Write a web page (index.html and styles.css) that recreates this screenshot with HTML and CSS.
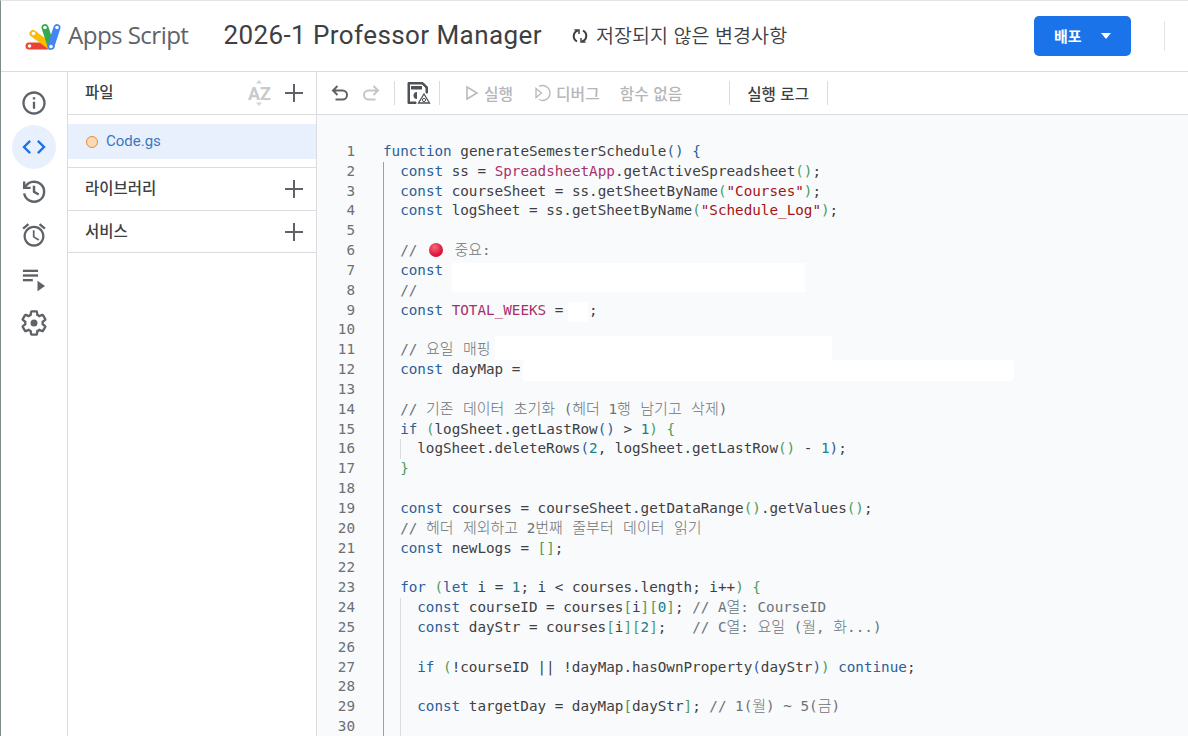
FILE: index.html
```html
<!DOCTYPE html>
<html lang="ko">
<head>
<meta charset="utf-8">
<title>Apps Script</title>
<link rel="stylesheet" href="styles.css">
</head>
<body>
<div class="app">
  <header class="topbar">
    <div class="brand">
      <svg class="logo" width="38" height="30" viewBox="0 0 38 30">
        <g fill="none" stroke-width="7" stroke-linecap="round">
          <path d="M4 24H26" stroke="#ea4335"/>
          <path d="M8 11.5L25 24" stroke="#fbbc04"/>
          <path d="M20 5.5L26 24" stroke="#34a853"/>
          <path d="M32 5.5L26 24" stroke="#4285f4"/>
        </g>
        <g fill="#fff"><circle cx="4.5" cy="24" r="1.8"/><circle cx="8.5" cy="11.5" r="1.8"/><circle cx="20" cy="5.5" r="1.8"/><circle cx="32" cy="5.5" r="1.8"/><circle cx="26" cy="24.5" r="1.8"/></g>
      </svg>
      <span class="brand-name">Apps Script</span>
    </div>
    <h1 class="title">2026-1 Professor Manager</h1>
    <div class="status">
      <svg width="18" height="18" viewBox="0 0 18 18" fill="none" stroke="#3c4043" stroke-width="2"><path d="M7 3.6A5.8 5.8 0 0 0 6 14.4M11 14.4A5.8 5.8 0 0 0 12 3.6"/><path d="M3.5 3H8V7" stroke-width="1.5"/><path d="M14.5 15H10V11" stroke-width="1.5"/></svg>
      <span class="status-text">저장되지 않은 변경사항</span>
    </div>
    <div class="spacer"></div>
    <button class="deploy"><span class="deploy-label">배포</span><i class="caret"></i></button>
    <div class="top-divider"></div>
  </header>

  <div class="main">
    <nav class="rail">
      <div class="rail-item"><svg width="28" height="28" viewBox="0 0 24 24" fill="#5f6368"><path d="M11 7h2v2h-2zm0 4h2v6h-2zm1-9C6.48 2 2 6.48 2 12s4.48 10 10 10 10-4.48 10-10S17.52 2 12 2zm0 18c-4.41 0-8-3.59-8-8s3.59-8 8-8 8 3.59 8 8-3.59 8-8 8z"/></svg></div>
      <div class="rail-item active"><svg width="28" height="28" viewBox="0 0 24 24" fill="#1a73e8"><path d="M9.4 16.6L4.8 12l4.6-4.6L8 6l-6 6 6 6 1.4-1.4zm5.2 0l4.6-4.6-4.6-4.6L16 6l6 6-6 6-1.4-1.4z"/></svg></div>
      <div class="rail-item"><svg width="28" height="28" viewBox="0 0 24 24" fill="none" stroke="#5f6368" stroke-width="2.1"><path d="M4.3 9A8.6 8.6 0 1 1 3.6 14"/><path d="M3.6 3.8V9.3H9.1" /><path d="M12 7.4V12.6L16 15"/></svg></div>
      <div class="rail-item"><svg width="28" height="28" viewBox="0 0 24 24" fill="#5f6368"><path d="M22 5.72l-4.6-3.86-1.29 1.53 4.6 3.86L22 5.72zM7.88 3.39L6.6 1.86 2 5.71l1.29 1.53 4.59-3.85zM12.5 8H11v6l4.75 2.85.75-1.23-4-2.37V8zM12 4c-4.97 0-9 4.03-9 9s4.02 9 9 9c4.97 0 9-4.03 9-9s-4.03-9-9-9zm0 16c-3.87 0-7-3.13-7-7s3.13-7 7-7 7 3.13 7 7-3.13 7-7 7z"/></svg></div>
      <div class="rail-item"><svg width="28" height="28" viewBox="0 0 24 24" fill="#5f6368"><rect x="2.5" y="4" width="13" height="2"/><rect x="2.5" y="8" width="13" height="2"/><rect x="2.5" y="12" width="8.5" height="2"/><path d="M15 13.5L21.5 18L15 22.5Z"/></svg></div>
      <div class="rail-item"><svg width="28" height="28" viewBox="0 0 24 24" fill="none" stroke="#5f6368" stroke-width="2"><path d="M19.43 12.98c.04-.32.07-.64.07-.98s-.03-.66-.07-.98l2.11-1.65c.19-.15.24-.42.12-.64l-2-3.46c-.12-.22-.39-.3-.61-.22l-2.49 1c-.52-.4-1.08-.73-1.69-.98l-.38-2.65C14.46 2.18 14.25 2 14 2h-4c-.25 0-.46.18-.49.42l-.38 2.65c-.61.25-1.17.59-1.69.98l-2.49-1c-.23-.09-.49 0-.61.22l-2 3.46c-.13.22-.07.49.12.64l2.11 1.65c-.04.32-.07.65-.07.98s.03.66.07.98l-2.11 1.65c-.19.15-.24.42-.12.64l2 3.46c.12.22.39.3.61.22l2.49-1c.52.4 1.08.73 1.69.98l.38 2.65c.03.24.24.42.49.42h4c.25 0 .46-.18.49-.42l.38-2.65c.61-.25 1.17-.59 1.69-.98l2.49 1c.23.09.49 0 .61-.22l2-3.46c.12-.22.07-.49-.12-.64l-2.11-1.65z"/><circle cx="12" cy="12" r="3" fill="#5f6368" stroke="none"/></svg></div>
    </nav>

    <aside class="files">
      <div class="files-head section">
        <span class="label">파일</span>
        <div class="actions">
          <svg width="24" height="26" viewBox="0 0 24 26"><path d="M12 0L9 3.5H15Z M12 26L9 22.5H15Z" fill="#d0d2d4"/><text x="1" y="20" class="az">AZ</text></svg>
          <svg width="20" height="20" viewBox="0 0 20 20" stroke="#5f6368" stroke-width="2"><path d="M10 1V19M1 10H19"/></svg>
        </div>
      </div>
      <div class="file-list">
        <div class="file"><i class="dot"></i><span class="file-name">Code.gs</span></div>
      </div>
      <div class="section lib">
        <span class="label">라이브러리</span>
        <svg width="20" height="20" viewBox="0 0 20 20" stroke="#5f6368" stroke-width="2"><path d="M10 1V19M1 10H19"/></svg>
      </div>
      <div class="section lib">
        <span class="label">서비스</span>
        <svg width="20" height="20" viewBox="0 0 20 20" stroke="#5f6368" stroke-width="2"><path d="M10 1V19M1 10H19"/></svg>
      </div>
    </aside>

    <section class="workspace">
      <div class="toolbar">
        <svg class="undo" width="20" height="20" viewBox="0 0 20 20" fill="none" stroke="#5f6368" stroke-width="2"><path d="M7.5 3L3 7.5L7.5 12M3 7.5H12.5A4.5 4.5 0 0 1 12.5 16.5H5.5"/></svg>
        <svg class="redo" width="20" height="20" viewBox="0 0 20 20" fill="none" stroke="#c4c6c8" stroke-width="2"><path d="M12.5 3L17 7.5L12.5 12M17 7.5H7.5A4.5 4.5 0 0 0 7.5 16.5H14.5"/></svg>
        <i class="sep first"></i>
        <svg class="save" width="26" height="26" viewBox="0 0 26 26"><path d="M3 2.5H18L22.5 7V13H21V8L17 4H4.5V22H11V23.5H3Z" fill="#4f5357" stroke="#4f5357" stroke-width="1"/><rect x="6" y="6" width="11" height="3.5" fill="#4f5357"/><path d="M12 12A3.5 3.5 0 1 0 12 19Z" fill="#4f5357"/><path d="M19 14L24.5 23H13.5Z" fill="#fff" stroke="#4f5357" stroke-width="1.3"/><circle cx="19" cy="20" r="1.6" fill="none" stroke="#4f5357"/></svg>
        <i class="sep second"></i>
        <div class="tool run"><svg width="14" height="16" viewBox="0 0 14 16" fill="none" stroke="#b9bbbe" stroke-width="1.6"><path d="M2 2L12 8L2 14Z"/></svg><span class="tool-label">실행</span></div>
        <div class="tool debug"><svg width="18" height="18" viewBox="0 0 18 18" fill="none" stroke="#b9bbbe" stroke-width="1.4"><path d="M2 4.5L7.5 9L2 13.5Z"/><path d="M5 2.5A7.4 7.4 0 1 1 5 15.5"/></svg><span class="tool-label">디버그</span></div>
        <div class="tool fn"><span class="tool-label">함수 없음</span></div>
        <i class="sep third"></i>
        <span class="log tool-label">실행 로그</span>
        <i class="sep fourth"></i>
      </div>

      <div class="editor">
        <div class="row"><span class="ln">1</span><span class="code"><b class="k">function</b> generateSemesterSchedule<b class="k">() {</b></span></div>
        <div class="row"><span class="ln">2</span><i class="g"></i><span class="code"><b class="k">const</b> ss = <b class="t">SpreadsheetApp</b>.getActiveSpreadsheet<b class="p">()</b>;</span></div>
        <div class="row"><span class="ln">3</span><i class="g"></i><span class="code"><b class="k">const</b> courseSheet = ss.getSheetByName<b class="p">(</b><b class="s">"Courses"</b><b class="p">)</b>;</span></div>
        <div class="row"><span class="ln">4</span><i class="g"></i><span class="code"><b class="k">const</b> logSheet = ss.getSheetByName<b class="p">(</b><b class="s">"Schedule_Log"</b><b class="p">)</b>;</span></div>
        <div class="row"><span class="ln">5</span><i class="g"></i><span class="code"></span></div>
        <div class="row"><span class="ln">6</span><i class="g"></i><span class="code"><b class="c">// <i class="ball"></i> <span class="h">중요</span>:</b></span></div>
        <div class="row"><span class="ln">7</span><i class="g"></i><span class="code"><b class="k">const</b></span></div>
        <div class="row"><span class="ln">8</span><i class="g"></i><span class="code"><b class="c">//</b></span></div>
        <div class="row"><span class="ln">9</span><i class="g"></i><span class="code"><b class="k">const</b> <b class="t">TOTAL_WEEKS</b> =   ;</span></div>
        <div class="row"><span class="ln">10</span><i class="g"></i><span class="code"></span></div>
        <div class="row"><span class="ln">11</span><i class="g"></i><span class="code"><b class="c">// <span class="h">요일 매핑</span></b></span></div>
        <div class="row"><span class="ln">12</span><i class="g"></i><span class="code"><b class="k">const</b> dayMap =</span></div>
        <div class="row"><span class="ln">13</span><i class="g"></i><span class="code"></span></div>
        <div class="row"><span class="ln">14</span><i class="g"></i><span class="code"><b class="c">// <span class="h">기존 데이터 초기화</span> (<span class="h">헤더</span> 1<span class="h">행 남기고 삭제</span>)</b></span></div>
        <div class="row"><span class="ln">15</span><i class="g"></i><span class="code"><b class="k">if</b> <b class="p">(</b>logSheet.getLastRow<b class="k">()</b> &gt; <b class="n">1</b><b class="p">) {</b></span></div>
        <div class="row"><span class="ln">16</span><i class="g"></i><i class="g2"></i><span class="code">logSheet.deleteRows<b class="k">(</b><b class="n">2</b>, logSheet.getLastRow<b class="p">()</b> - <b class="n">1</b><b class="k">)</b>;</span></div>
        <div class="row"><span class="ln">17</span><i class="g"></i><span class="code"><b class="p">}</b></span></div>
        <div class="row"><span class="ln">18</span><i class="g"></i><span class="code"></span></div>
        <div class="row"><span class="ln">19</span><i class="g"></i><span class="code"><b class="k">const</b> courses = courseSheet.getDataRange<b class="p">()</b>.getValues<b class="p">()</b>;</span></div>
        <div class="row"><span class="ln">20</span><i class="g"></i><span class="code"><b class="c">// <span class="h">헤더 제외하고</span> 2<span class="h">번째 줄부터 데이터 읽기</span></b></span></div>
        <div class="row"><span class="ln">21</span><i class="g"></i><span class="code"><b class="k">const</b> newLogs = <b class="p">[]</b>;</span></div>
        <div class="row"><span class="ln">22</span><i class="g"></i><span class="code"></span></div>
        <div class="row"><span class="ln">23</span><i class="g"></i><span class="code"><b class="k">for</b> <b class="p">(</b><b class="k">let</b> i = <b class="n">1</b>; i &lt; courses.length; i++<b class="p">) {</b></span></div>
        <div class="row"><span class="ln">24</span><i class="g"></i><i class="g2"></i><span class="code"><b class="k">const</b> courseID = courses<b class="p">[</b>i<b class="p">][</b><b class="n">0</b><b class="p">]</b>; <b class="c">// A<span class="h">열</span>: CourseID</b></span></div>
        <div class="row"><span class="ln">25</span><i class="g"></i><i class="g2"></i><span class="code"><b class="k">const</b> dayStr = courses<b class="p">[</b>i<b class="p">][</b><b class="n">2</b><b class="p">]</b>;   <b class="c">// C<span class="h">열</span>: <span class="h">요일</span> (<span class="h">월</span>, <span class="h">화</span>...)</b></span></div>
        <div class="row"><span class="ln">26</span><i class="g"></i><i class="g2"></i><span class="code"></span></div>
        <div class="row"><span class="ln">27</span><i class="g"></i><i class="g2"></i><span class="code"><b class="k">if</b> <b class="p">(</b>!courseID || !dayMap.hasOwnProperty<b class="k">(</b>dayStr<b class="k">)</b><b class="p">)</b> <b class="k">continue</b>;</span></div>
        <div class="row"><span class="ln">28</span><i class="g"></i><i class="g2"></i><span class="code"></span></div>
        <div class="row"><span class="ln">29</span><i class="g"></i><i class="g2"></i><span class="code"><b class="k">const</b> targetDay = dayMap<b class="p">[</b>dayStr<b class="p">]</b>; <b class="c">// 1(<span class="h">월</span>) ~ 5(<span class="h">금</span>)</b></span></div>
        <div class="row"><span class="ln">30</span><i class="g"></i><i class="g2"></i><span class="code"></span></div>
        <i class="mask m1"></i><i class="mask m2"></i><i class="mask m3"></i><i class="mask m4"></i>
      </div>
    </section>
  </div>
</div>
</body>
</html>
```
FILE: styles.css
```css
* { box-sizing: border-box; }
html, body { margin: 0; height: 100%; overflow: hidden; background: #fff; }
body { font-family: "Noto Sans CJK KR", Roboto, sans-serif; color: #3c4043; }
.app { width: 1188px; height: 736px; display: flex; flex-direction: column; border-left: 1px solid #7f8c8c; border-top: 1px solid #e3e4e5; overflow: hidden; }

.topbar { height: 71px; flex: none; display: flex; align-items: center; border-bottom: 1px solid #dadce0; }
.brand { display: flex; align-items: center; margin-left: 24px; }
.logo { display: block; margin-top: 1px; }
.brand-name { font: 400 24.2px "Open Sans", Roboto, sans-serif; letter-spacing: -0.6px; color: #5f6368; margin-left: 5px; padding-bottom: 4px; }
.title { font: 400 26px Roboto, sans-serif; letter-spacing: 0.42px; color: #3c4043; margin: 0 0 0 35px; padding-bottom: 2px; }
.status { display: flex; align-items: center; gap: 7px; margin-left: 29px; color: #3c4043; }
.status-text { font-size: 19.6px; font-weight: 350; padding-bottom: 4px; }
.spacer { flex: 1; }
.deploy { width: 97px; height: 40px; border: 0; border-radius: 5px; background: #1a73e8; color: #fff; display: flex; align-items: center; padding: 0 0 0 20px; font: 700 15px "Noto Sans CJK KR", sans-serif; }
.deploy-label { padding-bottom: 2px; }
.caret { width: 0; height: 0; margin-left: 19px; border: 5.5px solid transparent; border-top: 6px solid #fff; border-bottom: 0; }
.top-divider { width: 1px; height: 30px; background: #e3e4e5; margin: 0 23px 0 33px; }

.main { flex: 1; display: flex; min-height: 0; }
.rail { width: 67px; flex: none; border-right: 1px solid #dadce0; display: flex; flex-direction: column; align-items: center; padding-top: 9px; gap: 0; }
.rail-item { width: 44px; height: 44px; display: flex; align-items: center; justify-content: center; border-radius: 50%; }
.rail-item.active { background: #e8f0fe; }

.files { width: 249px; flex: none; border-right: 1px solid #dadce0; font-size: 15.5px; font-weight: 500; }
.section { display: flex; align-items: center; justify-content: space-between; padding: 0 12px 0 17px; border-bottom: 1px solid #dadce0; }
.label { padding-bottom: 4px; }
.files-head { height: 43px; padding-bottom: 1px; }
.actions { display: flex; align-items: center; gap: 13px; }
.az { font: 700 18px Roboto, sans-serif; fill: #c8cacc; }
.file-list { padding: 9px 0 8px; height: 53px; border-bottom: 1px solid #dadce0; }
.file { height: 35px; background: #e8f0fe; display: flex; align-items: center; padding-left: 18px; gap: 8px; }
.file-name { color: #3a78bd; font: 400 15px Roboto, sans-serif; padding-bottom: 2px; }
.dot { width: 12px; height: 12px; border-radius: 50%; background: #fdd9b5; border: 1px solid #e58a36; }
.lib { height: 43px; }
.lib:last-child { height: 42px; }

.workspace { flex: 1; min-width: 0; display: flex; flex-direction: column; background: #f9fafb; }
.toolbar { height: 43px; flex: none; background: #fff; border-bottom: 1px solid #dadce0; display: flex; align-items: center; color: #b4b6b9; }
.tool-label { font-size: 15.8px; font-weight: 500; }
.undo { margin-left: 13px; }
.redo { margin-left: 11px; }
.sep { width: 1px; height: 24px; background: #dadce0; }
.sep.first { margin-left: 13px; }
.save { margin-left: 10px; }
.sep.second { margin-left: 8px; }
.tool { display: flex; align-items: center; gap: 5px; }
.run { margin-left: 25px; }
.debug { margin-left: 21px; gap: 4px; }
.fn { margin-left: 20px; }
.sep.third { margin-left: 47px; }
.log { margin-left: 17px; color: #3c4043; font-size: 15.6px; font-weight: 500; }
.sep.fourth { margin-left: 18px; }

.editor { flex: 1; position: relative; overflow: hidden; padding-top: 27px; font: 400 14.28px "DejaVu Sans Mono", "Noto Sans CJK KR", monospace; color: #3c4043; }
.row { display: flex; height: 19.83px; line-height: 19.83px; white-space: pre; }
.ln { width: 38px; text-align: right; color: #6b7075; margin-right: 28px; flex: none; }
.g { width: 17.14px; flex: none; border-left: 1px solid #9aa0a6; }
.g2 { width: 17.14px; flex: none; border-left: 1px solid #dadce0; }
.code b { font-weight: 400; }
.h { font-family: "Noto Sans CJK KR", sans-serif; font-size: 15px; font-weight: 300; line-height: 1; word-spacing: 5.2px; }
.k { color: #2a6099; }
.t { color: #a9306c; }
.s { color: #a31515; }
.c { color: #6b7378; }
.n { color: #1a7f86; }
.p { color: #4e9a60; }
.ball { display: inline-block; width: 14px; height: 14px; border-radius: 50%; background: radial-gradient(circle at 40% 30%, #f56a7c, #e0163c 60%, #b00d2c); vertical-align: -2px; margin: 0 3px; }
.mask { position: absolute; background: #fff; }
.m1 { left: 135px; top: 148px; width: 353px; height: 29px; }
.m2 { left: 251px; top: 187px; width: 20px; height: 20px; }
.m3 { left: 178px; top: 221px; width: 337px; height: 24px; }
.m4 { left: 206px; top: 245px; width: 491px; height: 21px; border-radius: 3px; }
```
